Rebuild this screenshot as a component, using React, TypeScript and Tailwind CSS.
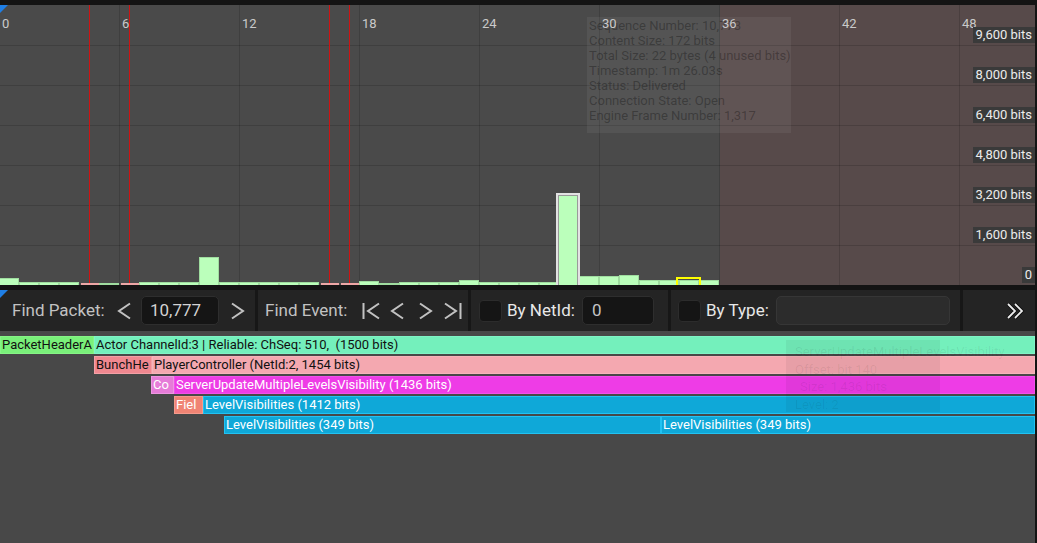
import React from 'react';

const xLabels = [0, 6, 12, 18, 24, 30, 36, 42, 48];
const yLabels = ['9,600 bits', '8,000 bits', '6,400 bits', '4,800 bits', '3,200 bits', '1,600 bits', '0'];

// page-top of each packet bar (chart starts at page y=5)
const greenTops: Record<number, number> = {
  0: 278, 1: 282, 2: 282, 3: 282, 5: 283, 7: 282, 8: 282, 9: 282, 10: 257,
  11: 282, 12: 282, 13: 282, 14: 282, 15: 282, 18: 281, 19: 283, 20: 282, 21: 282, 22: 282,
  23: 280, 24: 282, 25: 282, 26: 282, 27: 282, 29: 276, 30: 276, 31: 275, 32: 280, 33: 280,
  34: 280, 35: 280,
};
const pinks = [4, 6, 16, 17];
const redLines = [89, 129, 329, 349];

const tooltipLines = [
  'Sequence Number: 10,778',
  'Content Size: 172 bits',
  'Total Size: 22 bytes (4 unused bits)',
  'Timestamp: 1m 26.03s',
  'Status: Delivered',
  'Connection State: Open',
  'Engine Frame Number: 1,317',
];

function Chart() {
  return (
    <div className="relative w-[1035px] h-[280px] flex shrink-0">
      <div className="w-[720px] bg-[#4a4a4a]" />
      <div className="flex-1 bg-[#574a4a]" />
      <svg className="absolute left-0 top-0" width={1035} height={280} shapeRendering="crispEdges">
        {[1, 2, 3, 4, 5, 6, 7, 8].map((k) => (
          <rect key={'v' + k} x={120 * k - 1} y={0} width={1} height={280} fill="rgba(0,0,0,0.15)" />
        ))}
        {[40, 80, 120, 160, 200, 240].map((y) => (
          <rect key={'h' + y} x={0} y={y} width={1035} height={1} fill="rgba(0,0,0,0.15)" />
        ))}
        {redLines.map((x) => (
          <rect key={'r' + x} x={x} y={0} width={1} height={280} fill="#d01212" />
        ))}
        {Object.entries(greenTops).map(([k, t]) => {
          const i = Number(k);
          const left = 20 * i - 1;
          const top = t - 5;
          return (
            <g key={'g' + i}>
              <rect x={left} y={top} width={20} height={280 - top} fill="#9fdc9f" />
              {280 - top > 2 && (
                <rect x={left + 1} y={top + 1} width={18} height={280 - top - 1} fill="#bbffbb" />
              )}
            </g>
          );
        })}
        {pinks.map((i) => (
          <rect key={'p' + i} x={20 * i + 1} y={278} width={18} height={2} fill="#eda6a6" />
        ))}
        <rect x={556} y={188} width={24} height={92} fill="#e2e2e2" />
        <rect x={558} y={190} width={20} height={90} fill="#9a9a9a" />
        <rect x={559} y={191} width={18} height={89} fill="#bbffbb" />
        <rect x={677} y={273} width={23} height={8} fill="none" stroke="#ffff00" strokeWidth={2} />
      </svg>
      <div className="absolute left-0 top-0 w-0 h-0 border-t-[8px] border-r-[8px] border-t-[#1f7fe6] border-r-transparent" />
      <div className="absolute left-[587px] top-[12px] w-[204px] h-[116px] bg-[rgba(255,255,255,0.06)] pl-[2px] pt-[1px] text-[13px] leading-[15px] text-black/30 whitespace-nowrap">
        {tooltipLines.map((l) => (
          <div key={l}>{l}</div>
        ))}
      </div>
      {xLabels.map((v, k) => (
        <div
          key={'xl' + v}
          className="absolute top-[11px] text-[13px] leading-[16px] text-[#cacaca]"
          style={{ left: 120 * k + 2 }}
        >
          {v}
        </div>
      ))}
      {yLabels.map((l, k) => (
        <div
          key={'yl' + l}
          className="absolute right-0 h-[16px] px-[3px] bg-[#3a3a3a] text-[13px] leading-[16px] text-[#ececec]"
          style={{ top: 22 + 40 * k }}
        >
          {l}
        </div>
      ))}
    </div>
  );
}

function Chev({ dir, className }: { dir: 'l' | 'r'; className?: string }) {
  return (
    <svg width={16} height={18} viewBox="0 0 16 18" className={className}>
      <polyline
        points={dir === 'l' ? '14,1.5 3,9 14,16.5' : '2,1.5 13,9 2,16.5'}
        fill="none"
        stroke="#c2c2c2"
        strokeWidth={2}
      />
    </svg>
  );
}

function ChevBar({ dir }: { dir: 'l' | 'r' }) {
  return (
    <svg width={19} height={18} viewBox="0 0 19 18">
      {dir === 'l' ? (
        <>
          <rect x={0.5} y={1} width={2} height={16} fill="#c2c2c2" />
          <polyline points="17,1.5 6,9 17,16.5" fill="none" stroke="#c2c2c2" strokeWidth={2} />
        </>
      ) : (
        <>
          <polyline points="2,1.5 13,9 2,16.5" fill="none" stroke="#c2c2c2" strokeWidth={2} />
          <rect x={16.5} y={1} width={2} height={16} fill="#c2c2c2" />
        </>
      )}
    </svg>
  );
}

function Sep({ className }: { className: string }) {
  return <div className={'h-full w-[3px] bg-[#171717] shrink-0 ' + className} />;
}

function Check({ className }: { className: string }) {
  return (
    <div
      className={
        'w-[23px] h-[22px] rounded-[4px] bg-[#151515] border border-[#2c2c2c] shrink-0 ' + className
      }
    />
  );
}

function Toolbar() {
  return (
    <div className="relative w-[1035px] h-[41px] bg-[#242424] flex items-center shrink-0 text-[17px]">
      <div className="absolute left-0 top-0 w-0 h-0 border-t-[8px] border-r-[8px] border-t-[#1f7fe6] border-r-transparent" />
      <span className="ml-[12px] w-[104px] shrink-0 text-[#c2c2c2] whitespace-nowrap">Find Packet:</span>
      <Chev dir="l" />
      <div className="ml-[9px] w-[78px] h-[29px] rounded-[5px] bg-[#151515] border border-[#2e2e2e] pl-[8px] text-[#d2d2d2] leading-[27px] shrink-0">
        10,777
      </div>
      <Chev dir="r" className="ml-[11px]" />
      <Sep className="ml-[9px]" />
      <span className="ml-[7px] w-[97px] shrink-0 text-[#c2c2c2] whitespace-nowrap">Find Event:</span>
      <ChevBar dir="l" />
      <Chev dir="l" className="ml-[8px]" />
      <Chev dir="r" className="ml-[13px]" />
      <div className="ml-[9px]">
        <ChevBar dir="r" />
      </div>
      <Sep className="ml-[6px]" />
      <Check className="ml-[8px]" />
      <span className="ml-[5px] w-[75px] shrink-0 text-[#e8e8e8] whitespace-nowrap">By NetId:</span>
      <div className="w-[72px] h-[29px] rounded-[5px] bg-[#151515] border border-[#2e2e2e] pl-[9px] text-[#c4c4c4] leading-[27px] shrink-0">
        0
      </div>
      <Sep className="ml-[14px]" />
      <Check className="ml-[7px]" />
      <span className="ml-[5px] w-[70px] shrink-0 text-[#e8e8e8] whitespace-nowrap">By Type:</span>
      <div className="w-[174px] h-[29px] rounded-[5px] bg-[#2c2c2c] border border-[#363636] shrink-0" />
      <Sep className="ml-[10px]" />
      <svg width={20} height={18} viewBox="0 0 20 18" className="ml-[43px]">
        <g fill="none" stroke="#000" strokeWidth={3.5} opacity={0.6}>
          <polyline points="2,2 9,9 2,16" />
          <polyline points="9,2 16,9 9,16" />
        </g>
        <g fill="none" stroke="#ececec" strokeWidth={1.8}>
          <polyline points="2,2 9,9 2,16" />
          <polyline points="9,2 16,9 9,16" />
        </g>
      </svg>
    </div>
  );
}

type Box = { text: string; bg: string; border: string; fg: string; w?: string };

function Row({ ml, boxes }: { ml: string; boxes: Box[] }) {
  return (
    <div className={'flex h-[18px] mb-[2px] ' + ml}>
      {boxes.map((b, i) => (
        <div
          key={i}
          className={
            'h-[18px] border overflow-hidden whitespace-pre px-[1px] text-[13px] leading-[16px] ' +
            (b.w ? b.w + ' shrink-0 ' : 'flex-1 ') +
            b.bg +
            ' ' +
            b.border +
            ' ' +
            b.fg
          }
        >
          {b.text}
        </div>
      ))}
    </div>
  );
}

const BLUE = { bg: 'bg-[#0fa8d8]', border: 'border-[#22c2f2]', fg: 'text-white' };

export default function App() {
  return (
    <div className="w-[1037px] h-[543px] bg-[#141414] flex flex-col overflow-hidden font-['Roboto','Liberation_Sans',sans-serif]">
      <div className="h-[5px] shrink-0" />
      <Chart />
      <div className="h-[5px] shrink-0" />
      <Toolbar />
      <div className="relative w-[1035px] flex-1 bg-[#484848] pt-[5px]">
        <Row
          ml="ml-0"
          boxes={[
            { text: 'PacketHeaderA', bg: 'bg-[#7af07a]', border: 'border-[#86f486]', fg: 'text-[#111]', w: 'w-[94px]' },
            { text: 'Actor ChannelId:3 | Reliable: ChSeq: 510,  (1500 bits)', bg: 'bg-[#74f0bc]', border: 'border-[#80f4c6]', fg: 'text-[#111]' },
          ]}
        />
        <Row
          ml="ml-[94px]"
          boxes={[
            { text: 'BunchHe', bg: 'bg-[#f08890]', border: 'border-[#f4a0a6]', fg: 'text-[#111]', w: 'w-[58px]' },
            { text: 'PlayerController (NetId:2, 1454 bits)', bg: 'bg-[#f4a8b0]', border: 'border-[#f6b4ba]', fg: 'text-[#111]' },
          ]}
        />
        <Row
          ml="ml-[151px]"
          boxes={[
            { text: 'Co', bg: 'bg-[#e67cd8]', border: 'border-[#ee96e2]', fg: 'text-white', w: 'w-[23px]' },
            { text: 'ServerUpdateMultipleLevelsVisibility (1436 bits)', bg: 'bg-[#ee3ce6]', border: 'border-[#f052ea]', fg: 'text-white' },
          ]}
        />
        <Row
          ml="ml-[174px]"
          boxes={[
            { text: 'Fiel', bg: 'bg-[#f08474]', border: 'border-[#f49a8c]', fg: 'text-white', w: 'w-[29px]' },
            { text: 'LevelVisibilities (1412 bits)', ...BLUE },
          ]}
        />
        <Row
          ml="ml-[224px]"
          boxes={[
            { text: 'LevelVisibilities (349 bits)', ...BLUE, w: 'w-[437px]' },
            { text: 'LevelVisibilities (349 bits)', ...BLUE },
          ]}
        />
        <div className="absolute left-[786px] top-[9px] w-[154px] h-[72px] bg-black/5 pl-[9px] pt-[3px] text-[13px] leading-[17.5px] text-black/[0.07] whitespace-nowrap">
          <div>ServerUpdateMultipleLevelsVisibility</div>
          <div>Offset: bit 140</div>
          <div className="pl-[5px]">Size: 1,436 bits</div>
          <div>Level: 2</div>
        </div>
      </div>
    </div>
  );
}
